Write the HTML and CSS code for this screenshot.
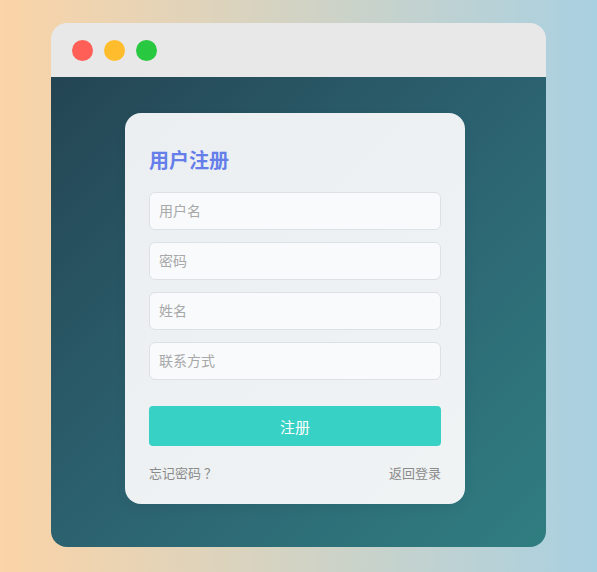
FILE: index.html
```html
<!DOCTYPE html>
<html lang="zh-CN">
<head>
    <meta charset="UTF-8">
    <meta name="viewport" content="width=device-width, initial-scale=1.0">
    <title>用户注册</title>
    <link rel="stylesheet" href="styles.css">
</head>
<body>
    <div class="window">
        <div class="title-bar">
            <span class="dot red"></span>
            <span class="dot yellow"></span>
            <span class="dot green"></span>
        </div>
        <div class="window-body">
            <div class="card">
                <h2>用户注册</h2>
                <form class="reg-form">
                    <input type="text" placeholder="用户名">
                    <input type="password" placeholder="密码">
                    <input type="text" placeholder="姓名">
                    <input type="text" placeholder="联系方式">
                    <button type="button">注册</button>
                </form>
                <div class="links">
                    <a href="#">忘记密码<span class="qmark">？</span></a>
                    <a href="#">返回登录</a>
                </div>
            </div>
        </div>
    </div>
</body>
</html>
```

FILE: styles.css
```css
body {
    font-family: "Noto Sans CJK SC", "Noto Sans", sans-serif;
    background: linear-gradient(90deg, #fbd4a7 0%, #d2d3c4 50%, #a9d0e1 100%);
    margin: 0;
    height: 100vh;
    display: flex;
    justify-content: center;
    align-items: flex-start;
    padding-top: 23px;
    box-sizing: border-box;
}

.window {
    width: 495px;
    height: 524px;
    border-radius: 16px;
    overflow: hidden;
    display: flex;
    flex-direction: column;
}

.title-bar {
    height: 54px;
    background-color: #e8e8e8;
    display: flex;
    align-items: center;
    gap: 11px;
    padding-left: 21px;
    flex-shrink: 0;
}

.dot {
    width: 21px;
    height: 21px;
    border-radius: 50%;
}

.red { background-color: #ff5f57; }
.yellow { background-color: #ffbd2e; }
.green { background-color: #28c840; }

.window-body {
    flex: 1;
    background: linear-gradient(135deg, #244553 0%, #2c6270 50%, #307e81 100%);
    padding: 36px 0 0 74px;
}

.card {
    width: 340px;
    height: 391px;
    box-sizing: border-box;
    background: linear-gradient(135deg, #ebeff1 0%, #f0f3f4 100%);
    border-radius: 16px;
    padding: 36px 24px 23px;
    box-shadow: 0 4px 12px rgba(0, 0, 0, 0.05);
}

h2 {
    margin: 0 0 21px;
    font-size: 20px;
    line-height: 22px;
    font-weight: bold;
    color: #667eea;
}

.reg-form {
    display: flex;
    flex-direction: column;
    gap: 12px;
}

input {
    height: 38px;
    box-sizing: border-box;
    border: 1px solid #dde1e5;
    border-radius: 6px;
    background-color: #f8fafc;
    padding: 0 9px 2px;
    font-family: inherit;
    font-size: 14px;
    color: #333;
    outline: none;
}

input::placeholder {
    color: #a8a8a8;
}

button {
    margin-top: 14px;
    height: 40px;
    border: none;
    border-radius: 4px;
    background-color: #38d1c5;
    color: white;
    font-family: inherit;
    font-size: 15px;
    cursor: pointer;
}

.links {
    margin-top: 18px;
    display: flex;
    justify-content: space-between;
    line-height: 18px;
}

.links a {
    color: #8a8a8a;
    font-size: 13px;
    text-decoration: none;
}

.qmark {
    margin-left: 3px;
}
```
